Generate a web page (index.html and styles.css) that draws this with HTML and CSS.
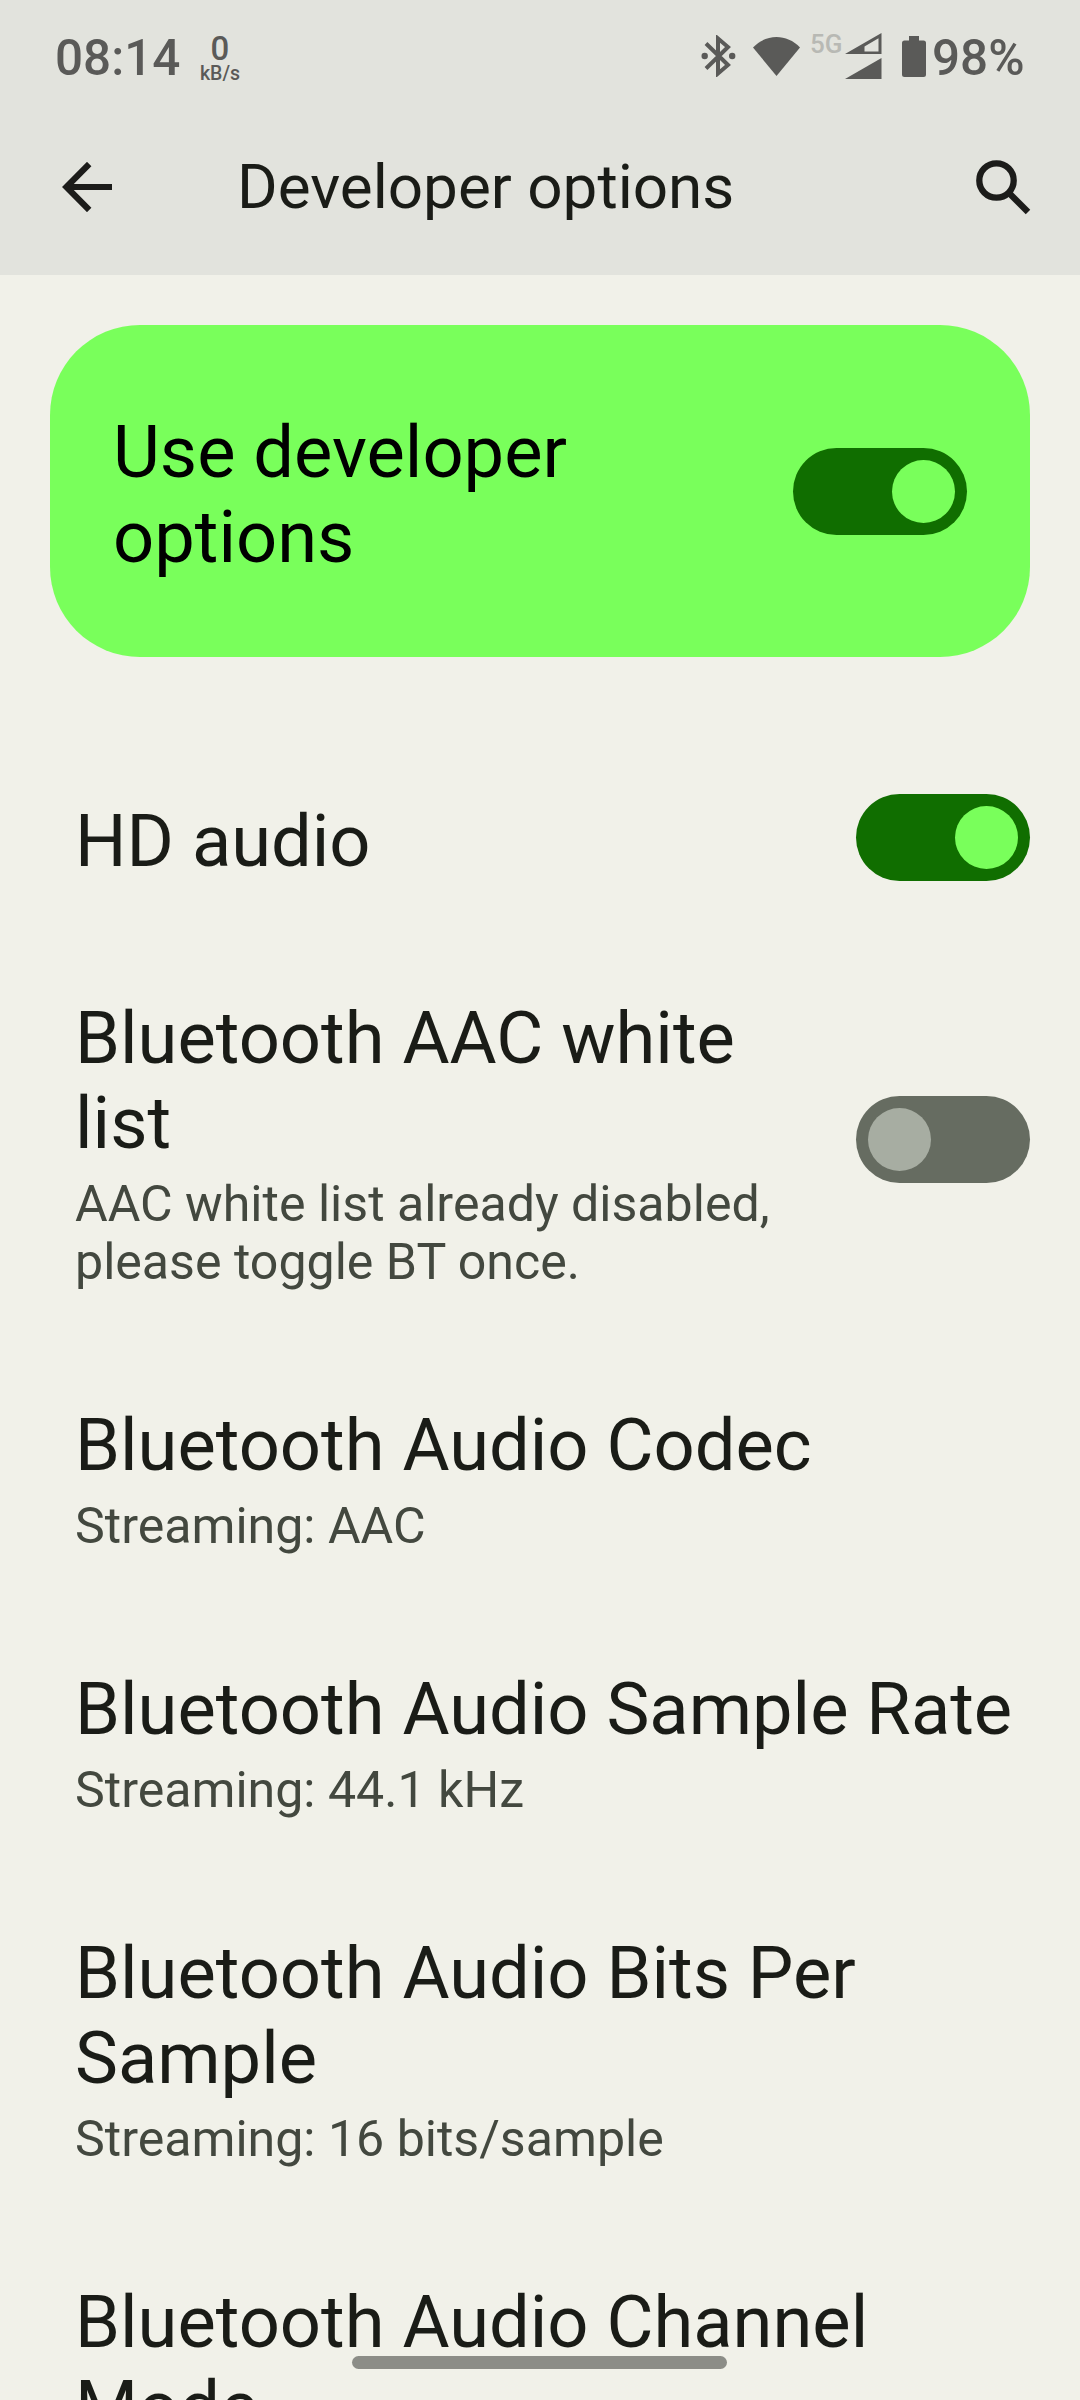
FILE: index.html
```html
<!DOCTYPE html>
<html lang="en">
<head>
<meta charset="utf-8">
<title>Developer options</title>
<link rel="stylesheet" href="styles.css">
</head>
<body>
<div class="screen">
  <header class="top">
    <div class="status">
      <span class="clock">08:14</span>
      <span class="net"><span class="net-value">0</span><span class="net-unit">kB/s</span></span>
      <svg class="icon-bt" width="36" height="42" viewBox="0 0 36 42">
        <path d="M5 8.500 27 30 17 38.500V3.500L27 12 5 33.500" fill="none" stroke="#5a5a58" stroke-width="4"/>
        <circle cx="3.700" cy="21" r="3.200" fill="#5a5a58"/><circle cx="31.200" cy="21" r="3.200" fill="#5a5a58"/>
      </svg>
      <svg class="icon-wifi" width="47" height="39" viewBox="0 0 47 39">
        <path d="M0 10.500C6.500 3.500 15 0 23.500 0S40.500 3.500 47 10.500L23.500 39Z" fill="#5a5a58"/>
      </svg>
      <span class="net-type">5G</span>
      <svg class="icon-signal" width="37" height="46" viewBox="0 0 37 46">
        <path fill-rule="evenodd" d="M0 21 36.500 0V21ZM19.500 18.500H33.500V5.300L19.500 13.500Z" fill="#5a5a58"/>
        <path d="M0 46 36.500 25V46Z" fill="#5a5a58"/>
      </svg>
      <svg class="icon-battery" width="24" height="41" viewBox="0 0 24 41">
        <path d="M7 0H17V4.500H21.500Q24 4.500 24 7V38.500Q24 41 21.500 41H2.500Q0 41 0 38.500V7Q0 4.500 2.500 4.500H7Z" fill="#5a5a58"/>
      </svg>
      <span class="percent">98%</span>
    </div>
    <div class="appbar">
      <svg width="50" height="50" viewBox="0 0 50 50">
        <path d="M50 25H5M27.200 2 4.400 25 27.200 48" fill="none" stroke="#1c1c1a" stroke-width="6.200"/>
      </svg>
      <h1 class="heading">Developer options</h1>
      <svg width="55" height="55" viewBox="0 0 55 55">
        <circle cx="20.500" cy="20.500" r="17.200" fill="none" stroke="#1c1c1a" stroke-width="6.300"/>
        <path d="M32.500 32.500 52 52" stroke="#1c1c1a" stroke-width="6.300"/>
      </svg>
    </div>
  </header>
  <main>
    <section class="card">
      <div class="title card-title">Use developer options</div>
      <div class="switch on"><div class="thumb"></div></div>
    </section>
    <section class="row">
      <div class="text"><div class="title">HD audio</div></div>
      <div class="switch on"><div class="thumb"></div></div>
    </section>
    <section class="row">
      <div class="text"><div class="title">Bluetooth AAC white list</div><div class="summary">AAC white list already disabled, please toggle BT once.</div></div>
      <div class="switch"><div class="thumb"></div></div>
    </section>
    <section class="row">
      <div class="text"><div class="title">Bluetooth Audio Codec</div><div class="summary">Streaming: AAC</div></div>
    </section>
    <section class="row">
      <div class="text"><div class="title">Bluetooth Audio Sample Rate</div><div class="summary">Streaming: 44.1 kHz</div></div>
    </section>
    <section class="row">
      <div class="text"><div class="title">Bluetooth Audio Bits Per Sample</div><div class="summary">Streaming: 16 bits/sample</div></div>
    </section>
    <section class="row">
      <div class="text"><div class="title">Bluetooth Audio Channel Mode</div></div>
    </section>
  </main>
  <div class="handle"></div>
</div>
</body>
</html>
```
FILE: styles.css
```css
* { box-sizing: border-box; }
body { margin: 0; font-family: Roboto, sans-serif; }
svg { display: block; flex: none; }
.screen {
  position: relative;
  width: 1080px;
  height: 2400px;
  overflow: hidden;
  background: #f1f1e9;
  color: #1a1c17;
}
.top { height: 275px; background: #e2e3dd; }
.status {
  display: flex;
  align-items: flex-start;
  height: 112px;
  padding: 33px 0 0 55px;
  color: #5a5a58;
  font-weight: 500;
}
.clock { width: 145px; font-size: 49.400px; line-height: 51px; }
.net { display: flex; flex-direction: column; align-items: center; width: 40px; }
.net-value { font-size: 33px; line-height: 31px; }
.net-unit { font-size: 19.500px; line-height: 19px; }
.icon-bt { margin: 2px 0 0 461px; }
.icon-wifi { margin: 4px 0 0 16px; }
.net-type { width: 35px; margin-left: 10px; font-size: 26px; line-height: 22px; color: #b8b9b4; }
.icon-battery { margin: 3px 0 0 20px; }
.percent { margin-left: 6px; font-size: 49.400px; line-height: 51px; }
.appbar {
  display: flex;
  align-items: center;
  height: 150px;
  padding: 0 49px 0 62px;
}
.heading {
  flex: 1;
  margin: 0 0 0 125px;
  font-size: 62px;
  font-weight: 400;
  line-height: 74px;
}
.card {
  display: flex;
  align-items: center;
  justify-content: space-between;
  height: 332px;
  margin: 50px 50px 82px;
  padding: 0 63px;
  border-radius: 90px;
  background: #79ff5b;
}
.title { font-size: 72.260px; line-height: 85px; }
.card-title { width: 560px; padding-top: 8px; color: #000; }
.row {
  display: flex;
  align-items: center;
  justify-content: space-between;
  padding: 0 50px 0 75px;
}
.text { flex: 1; padding: 60px 0 52px; }
.summary { margin-top: 9px; font-size: 50.100px; line-height: 58px; color: #43483f; }
.switch {
  display: flex;
  flex: none;
  width: 174px;
  height: 87px;
  margin-left: 80px;
  padding: 12px;
  border-radius: 44px;
  background: #666c61;
}
.thumb { width: 63px; height: 63px; border-radius: 50%; background: #a7ada2; }
.switch.on { justify-content: flex-end; background: #106e00; }
.switch.on .thumb { background: #79ff5b; }
.handle {
  position: absolute;
  left: 352px;
  top: 2356px;
  width: 375px;
  height: 13px;
  border-radius: 7px;
  background: #8c8d87;
}
```
